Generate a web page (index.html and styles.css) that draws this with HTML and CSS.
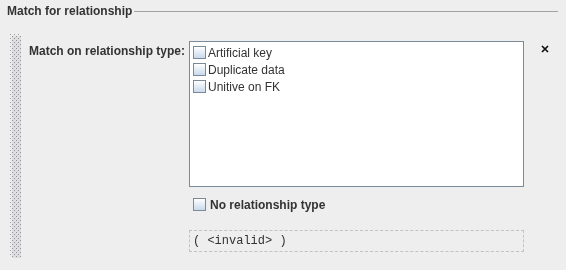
FILE: index.html
```html
<!DOCTYPE html>
<html lang="en">
<head>
  <meta charset="UTF-8" />
  <title>Match for relationship</title>
  <link rel="stylesheet" href="styles.css">
</head>
<body>
  <div class="panel">
    <div class="panel-title">
      <span>Match for relationship</span>
      <div class="title-line"></div>
    </div>

    <div class="panel-body">
      <div class="grip"></div>

      <div class="match-form">
        <div class="field-label">Match on relationship type:</div>
        <div class="type-list">
          <label class="list-row"><span class="check"></span>Artificial key</label>
          <label class="list-row"><span class="check"></span>Duplicate data</label>
          <label class="list-row"><span class="check"></span>Unitive on FK</label>
        </div>
        <div class="close-btn">
          <svg width="8" height="8" viewBox="0 0 8 8">
            <path d="M1 1 L7 7 M7 1 L1 7" stroke="#111" stroke-width="1.7" fill="none"/>
          </svg>
        </div>

        <div></div>
        <label class="no-type"><span class="check"></span>No relationship type</label>
        <div></div>

        <div></div>
        <div class="expr">( &lt;invalid&gt; )</div>
        <div></div>
      </div>
    </div>
  </div>
</body>
</html>
```

FILE: styles.css
```css
body {
  margin: 0;
  background: #eeeeee;
  font-family: "Liberation Sans", Arial, sans-serif;
  font-size: 12px;
  color: #222;
}

.panel {
  width: 566px;
  height: 270px;
}

/* titulek s čarou */
.panel-title {
  display: flex;
  align-items: center;
  height: 22px;
  padding-left: 7px;
  font-weight: bold;
  color: #333;
}
.title-line {
  flex: 1;
  height: 1px;
  background: #a3a3a3;
  margin: 0 8px 0 2px;
}

.panel-body {
  display: flex;
  align-items: flex-start;
  margin-top: 12px;
  padding-left: 10px;
}

/* tečkovaný úchyt vlevo */
.grip {
  width: 11px;
  height: 224px;
  background-image:
    linear-gradient(90deg, transparent 1px, #eeeeee 1px),
    linear-gradient(transparent 1px, #eeeeee 1px);
  background-color: #9a9ea4;
  background-size: 4px 4px;
  position: relative;
}
.grip::after {
  content: "";
  position: absolute;
  inset: 2px 0 0 2px;
  background-image:
    linear-gradient(90deg, transparent 1px, #eeeeee 1px),
    linear-gradient(transparent 1px, #eeeeee 1px);
  background-color: #9a9ea4;
  background-size: 4px 4px;
  mix-blend-mode: multiply;
}

.match-form {
  display: grid;
  grid-template-columns: 164px 335px 1fr;
  column-gap: 4px;
  margin-top: 7px;
}

.field-label {
  text-align: right;
  font-weight: bold;
  color: #333;
  padding-top: 3px;
}

.type-list {
  box-sizing: border-box;
  height: 146px;
  background: #fff;
  border: 1px solid #7a8a99;
  padding-top: 2px;
  padding-left: 3px;
}

.list-row {
  display: flex;
  align-items: center;
  height: 17px;
  color: #333;
}

.check {
  display: inline-block;
  box-sizing: border-box;
  width: 13px;
  height: 13px;
  border: 1px solid #7a8a99;
  background: linear-gradient(#ffffff, #c9d9ec);
  margin-right: 2px;
}

.close-btn {
  padding: 1px 0 0 13px;
}

.no-type {
  display: flex;
  align-items: center;
  height: 13px;
  margin-top: 11px;
  padding-left: 4px;
  font-weight: bold;
  color: #333;
}
.no-type .check {
  margin-right: 4px;
}

.expr {
  box-sizing: border-box;
  margin-top: 19px;
  height: 22px;
  border: 1px dashed #c2c2c2;
  padding-left: 3px;
  font-family: "Liberation Mono", "Courier New", monospace;
  font-size: 12px;
  line-height: 20px;
  color: #333;
}
```
